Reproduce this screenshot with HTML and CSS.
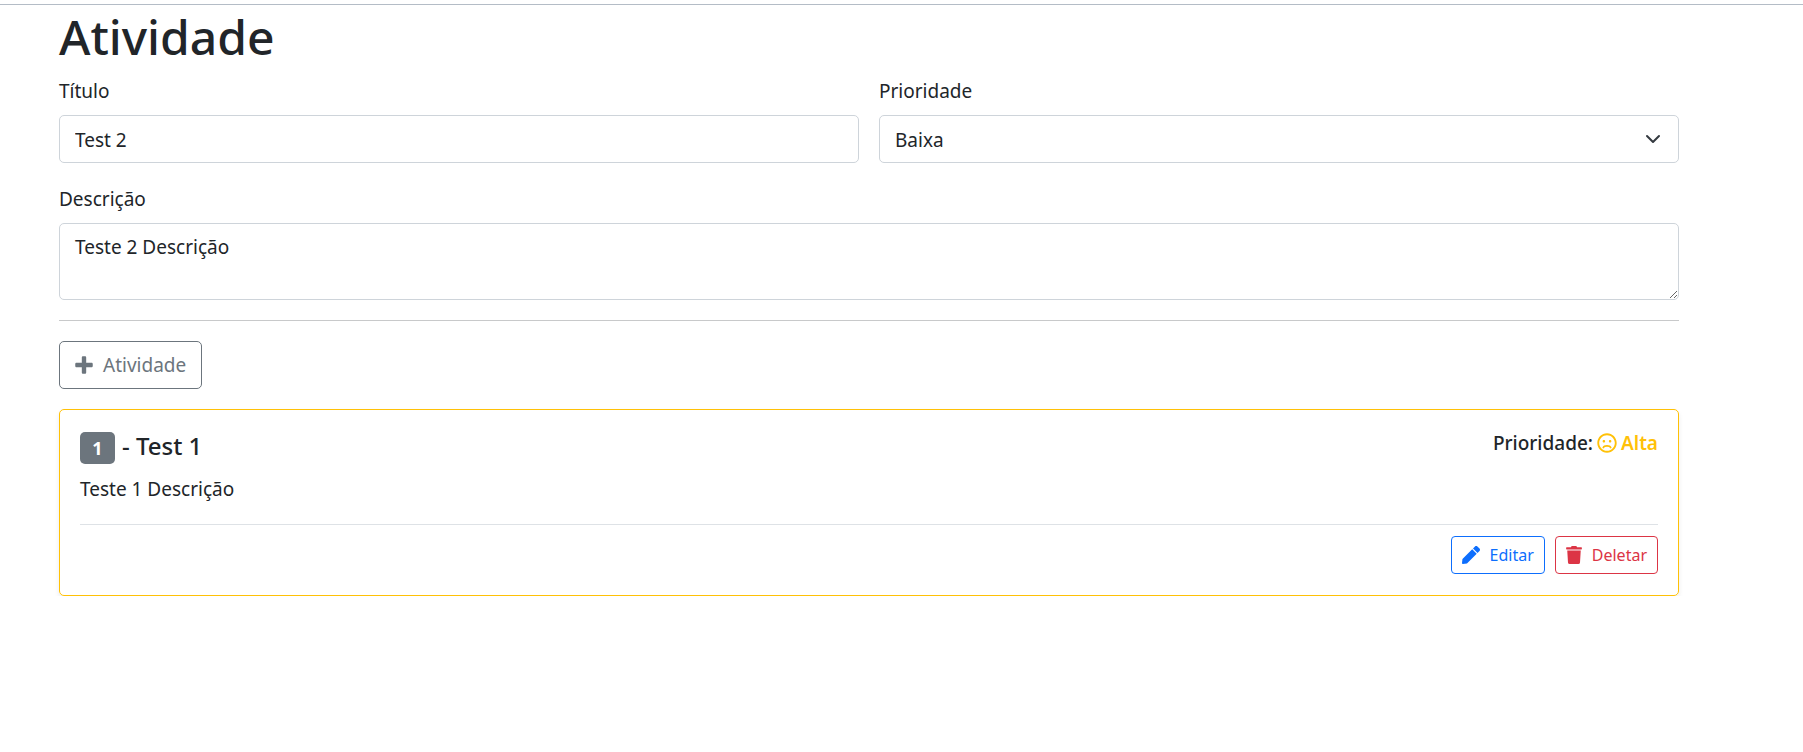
FILE: index.html
```html
<!DOCTYPE html>
<html lang="pt-BR">
<head>
<meta charset="utf-8">
<title>Atividade</title>
<link rel="stylesheet" href="styles.css">
</head>
<body>
<main class="container">
  <h1 class="title">Atividade</h1>
  <form class="form">
    <div class="field">
      <label for="titulo">Título</label>
      <input class="control" id="titulo" type="text" value="Test 2">
    </div>
    <div class="field">
      <label for="prioridade">Prioridade</label>
      <select class="control select" id="prioridade">
        <option selected>Baixa</option>
        <option>Normal</option>
        <option>Alta</option>
      </select>
    </div>
    <div class="field field-wide">
      <label for="descricao">Descrição</label>
      <textarea class="control textarea" id="descricao">Teste 2 Descrição</textarea>
    </div>
    <hr class="rule">
    <button class="btn btn-secondary" type="button">
      <svg class="icon icon-plus" viewBox="0 0 448 512" aria-hidden="true"><path d="M416 200H280V64c0-17.67-14.33-32-32-32h-48c-17.67 0-32 14.33-32 32v136H32c-17.67 0-32 14.33-32 32v48c0 17.67 14.33 32 32 32h136v136c0 17.67 14.33 32 32 32h48c17.67 0 32-14.33 32-32V312h136c17.67 0 32-14.33 32-32v-48c0-17.67-14.33-32-32-32z"/></svg>
      Atividade
    </button>
  </form>

  <article class="card">
    <div class="card-head">
      <h2 class="card-title"><span class="badge">1</span><span>- Test 1</span></h2>
      <div class="priority">
        <span>Prioridade:</span>
        <span class="level">
          <svg class="icon icon-face" viewBox="0 0 496 512" aria-hidden="true"><path d="M248 8C111 8 0 119 0 256s111 248 248 248 248-111 248-248S385 8 248 8zm0 448c-110.3 0-200-89.7-200-200S137.7 56 248 56s200 89.7 200 200-89.7 200-200 200zm-80-216c17.7 0 32-14.3 32-32s-14.3-32-32-32-32 14.3-32 32 14.3 32 32 32zm160-64c-17.7 0-32 14.3-32 32s14.3 32 32 32 32-14.3 32-32-14.3-32-32-32z"/><path class="mouth" d="M154 372C176 318 320 318 342 372"/></svg>
          Alta
        </span>
      </div>
    </div>
    <p class="card-text">Teste 1 Descrição</p>
    <div class="card-actions">
      <button class="btn btn-small btn-primary" type="button">
        <svg class="icon icon-pen" viewBox="0 0 512 512" aria-hidden="true"><path d="M290.74 93.24l128.02 128.02-277.99 277.99-114.14 12.6C11.35 513.54-1.56 500.62.14 485.34l12.7-114.22 277.9-277.88zm207.2-19.06l-60.11-60.11c-18.75-18.75-49.16-18.75-67.91 0l-56.55 56.55 128.02 128.02 56.55-56.55c18.75-18.76 18.75-49.16 0-67.91z"/></svg>
        Editar
      </button>
      <button class="btn btn-small btn-danger" type="button">
        <svg class="icon icon-trash" viewBox="0 0 448 512" aria-hidden="true"><path d="M432 32H312l-9.4-18.7A24 24 0 0 0 281.1 0H166.8a23.72 23.72 0 0 0-21.4 13.3L136 32H16A16 16 0 0 0 0 48v32a16 16 0 0 0 16 16h416a16 16 0 0 0 16-16V48a16 16 0 0 0-16-16zM53.2 467a48 48 0 0 0 47.9 45h245.8a48 48 0 0 0 47.9-45L416 128H32z"/></svg>
        Deletar
      </button>
    </div>
  </article>
</main>
</body>
</html>
```

FILE: styles.css
```css
*, *::before, *::after { box-sizing: border-box; }

body {
  margin: 0;
  padding-top: 4px;
  background: #fff;
  color: #212529;
  font: 400 19px/30px "Segoe UI", "Noto Sans", "Open Sans", sans-serif;
}

.container {
  border-top: 1px solid #b4bcc6;
  padding: 0 124px 0 59px;
}

.title {
  margin: 0;
  padding: 2px 0 9px;
  font-size: 48px;
  font-weight: 500;
  line-height: 60px;
}

.form {
  display: grid;
  grid-template-columns: 1fr 1fr;
  gap: 20px;
  justify-items: start;
}

.field { width: 100%; }
.field-wide, .rule { grid-column: 1 / -1; }

label {
  display: block;
  margin-bottom: 9px;
}

.field-wide label { padding-top: 1px; }

.control {
  display: block;
  width: 100%;
  height: 48px;
  padding: 9px 15px 7px;
  border: 1px solid #ced4da;
  border-radius: 5px;
  background: #fff;
  color: inherit;
  font: inherit;
}

.select {
  appearance: none;
  background: url("data:image/svg+xml,%3Csvg xmlns='http://www.w3.org/2000/svg' viewBox='0 0 16 16'%3E%3Cpath fill='none' stroke='%23343a40' stroke-linecap='round' stroke-linejoin='round' stroke-width='2' d='M2 5l6 6 6-6'/%3E%3C/svg%3E") no-repeat right 17px center / 16px;
}

.textarea {
  height: 77px;
  padding-top: 8px;
  resize: vertical;
}

.rule {
  width: 100%;
  height: 1px;
  margin: 0;
  border: 0;
  background: #c8c9ca;
}

.btn {
  display: inline-flex;
  align-items: center;
  gap: 10px;
  padding: 8px 15px;
  border: 1px solid currentColor;
  border-radius: 5px;
  background: #fff;
  font: inherit;
}

.btn-small {
  padding: 5px 10px;
  border-radius: 4px;
  font-size: 16px;
  line-height: 26px;
}

.btn-secondary { color: #6c757d; }
.btn-primary { color: #0d6efd; }
.btn-danger { color: #dc3545; }

.icon { fill: currentColor; flex: none; }
.icon-plus { width: 18px; height: 20px; }
.icon-face { width: 20px; height: 20px; }
.icon-pen { width: 18px; height: 18px; }
.icon-trash { width: 16px; height: 18px; }

.mouth {
  fill: none;
  stroke: currentColor;
  stroke-width: 44;
  stroke-linecap: round;
}

.card {
  margin-top: 20px;
  padding: 20px 20px 21px;
  border: 1px solid #ffc107;
  border-radius: 5px;
  box-shadow: 0 3px 5px rgba(0, 0, 0, 0.08);
}

.card-head {
  display: flex;
  justify-content: space-between;
  align-items: flex-start;
}

.card-title {
  display: flex;
  align-items: baseline;
  gap: 7px;
  margin: 0 0 10px;
  font-size: 24px;
  font-weight: 500;
  line-height: 32px;
}

.badge {
  min-width: 35px;
  padding: 4px 12px;
  border-radius: 5px;
  background: #6c757d;
  color: #fff;
  font-size: 18px;
  font-weight: 700;
  line-height: 24px;
  text-align: center;
}

.priority, .level {
  display: flex;
  align-items: center;
  gap: 4px;
  font-weight: 500;
}

.priority { line-height: 26px; }
.level { color: #ffc107; font-weight: 600; }

.card-text { margin: 0 0 20px; }

.card-actions {
  display: flex;
  justify-content: flex-end;
  gap: 10px;
  padding-top: 11px;
  border-top: 1px solid #dee2e6;
}
```
